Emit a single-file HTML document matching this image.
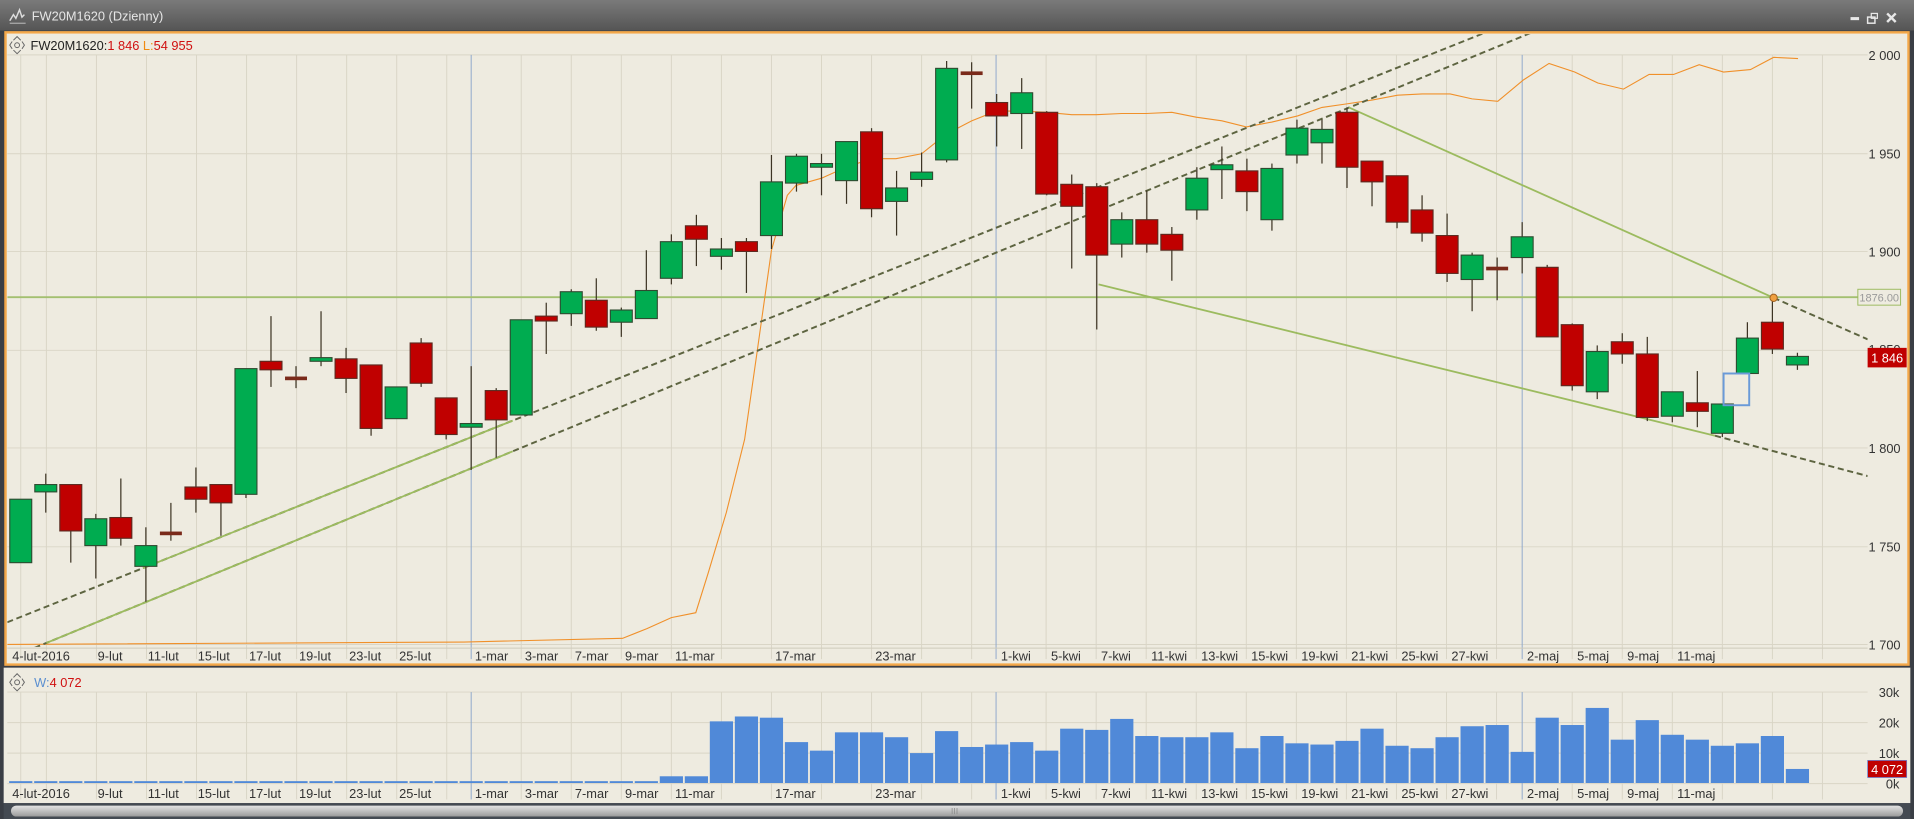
<!DOCTYPE html>
<html><head><meta charset="utf-8"><style>
html,body{margin:0;padding:0;background:#3b3f46;overflow:hidden}
svg{display:block}
text{font-family:"Liberation Sans",sans-serif}
</style></head><body>
<svg id="s" width="1914" height="819" viewBox="0 0 1568 671" preserveAspectRatio="none" xmlns="http://www.w3.org/2000/svg">
<defs>
<linearGradient id="tb" x1="0" y1="0" x2="0" y2="1"><stop offset="0" stop-color="#7a7a7a"/><stop offset="1" stop-color="#555"/></linearGradient>
<linearGradient id="sb" x1="0" y1="0" x2="0" y2="1"><stop offset="0" stop-color="#e4e4e4"/><stop offset="1" stop-color="#9a9a9a"/></linearGradient>
<clipPath id="pc"><rect x="6" y="28" width="1524" height="502"/></clipPath>
</defs>
<rect x="0" y="0" width="1568" height="671" fill="#3a3e45"/>
<rect x="0" y="0" width="1568" height="25" fill="url(#tb)"/>
<polyline points="8,17 11,12 13,15 16,8 18,14 20,12" fill="none" stroke="#ddd" stroke-width="1.2"/>
<line x1="8" y1="19" x2="21" y2="19" stroke="#ccc" stroke-width="0.8"/>
<text x="26" y="17" font-size="10.5" fill="#e6e6e6">FW20M1620 (Dzienny)</text>
<rect x="1516" y="14" width="7" height="2.5" fill="#e8e8e8"/>
<rect x="1530" y="14" width="6" height="5" fill="none" stroke="#e8e8e8" stroke-width="1.2"/><rect x="1533" y="11" width="5" height="4" fill="none" stroke="#e8e8e8" stroke-width="1"/>
<path d="M1546,11 L1553,18 M1553,11 L1546,18" stroke="#e8e8e8" stroke-width="2"/>
<rect x="4.5" y="26.5" width="1559" height="518" fill="#eeebe0" stroke="#f4a84a" stroke-width="2"/>
<g id="maingrid" stroke="#d9d5c6" stroke-width="0.8"></g>
<g id="main"></g>
<g fill="none" stroke="#666" stroke-width="0.8"><circle cx="14" cy="37" r="2"/><path d="M11,33 L14,30 L17,33 M11,41 L14,44 L17,41 M10,34 L8,37 L10,40 M18,34 L20,37 L18,40"/></g>
<text x="25" y="41" font-size="10.5" fill="#222">FW20M1620:<tspan fill="#d01010">1 846</tspan> <tspan fill="#f08a10">L:</tspan><tspan fill="#d01010">54 955</tspan></text>
<g font-size="10.5" fill="#333" text-anchor="end">
<text x="1557" y="49">2 000</text><text x="1557" y="130">1 950</text><text x="1557" y="210">1 900</text><text x="1557" y="290">1 850</text><text x="1557" y="371">1 800</text><text x="1557" y="452">1 750</text><text x="1557" y="532">1 700</text>
</g>
<rect x="1522" y="237" width="35" height="13" fill="#eeebe0" stroke="#9cbb5f" stroke-width="0.8"/>
<text x="1539.5" y="247" font-size="9" fill="#999" text-anchor="middle">1876.00</text>
<rect x="1530" y="285" width="32" height="16" fill="#c00000"/>
<text x="1546" y="297" font-size="10.5" fill="#fff" text-anchor="middle">1 846</text>
<g id="xl1" font-size="10.5" fill="#333"></g>
<rect x="3" y="547" width="1562" height="111" fill="#eeebe0"/>
<g id="volgrid" stroke="#d9d5c6" stroke-width="0.8"></g>
<g id="vol"></g>
<g fill="none" stroke="#666" stroke-width="0.8"><circle cx="14" cy="559" r="2"/><path d="M11,555 L14,552 L17,555 M11,563 L14,566 L17,563 M10,556 L8,559 L10,562 M18,556 L20,559 L18,562"/></g>
<text x="28" y="563" font-size="10.5" fill="#5b8fd0">W:<tspan fill="#d01010">4 072</tspan></text>
<g font-size="10.5" fill="#333" text-anchor="end">
<text x="1556" y="571">30k</text><text x="1556" y="596">20k</text><text x="1556" y="621">10k</text><text x="1556" y="646">0k</text>
</g>
<rect x="1530" y="623" width="32" height="14" fill="#c00000" stroke="#6a7fd0" stroke-width="0.6"/>
<text x="1546" y="634" font-size="10.5" fill="#fff" text-anchor="middle">4 072</text>
<g id="xl2" font-size="10.5" fill="#333"></g>
<rect x="3" y="658" width="1562" height="13" fill="#444a52"/>
<rect x="9" y="660" width="1550" height="9" rx="4.5" fill="url(#sb)"/>
<path d="M780,662 v5 M782,662 v5 M784,662 v5" stroke="#888" stroke-width="0.6"/>
</svg>
<script>
var NS="http://www.w3.org/2000/svg";
function el(p,t,a){var e=document.createElementNS(NS,t);for(var k in a)e.setAttribute(k,a[k]);p.appendChild(e);return e;}
var labels=[["4-lut-2016",10],["9-lut",80],["11-lut",121],["15-lut",162],["17-lut",204],["19-lut",245],["23-lut",286],["25-lut",327],["1-mar",389],["3-mar",430],["7-mar",471],["9-mar",512],["11-mar",553],["17-mar",635],["23-mar",717],["1-kwi",820],["5-kwi",861],["7-kwi",902],["11-kwi",943],["13-kwi",984],["15-kwi",1025],["19-kwi",1066],["21-kwi",1107],["25-kwi",1148],["27-kwi",1189],["2-maj",1251],["5-maj",1292],["9-maj",1333],["11-maj",1374]];
var mg=document.getElementById("maingrid"),vg=document.getElementById("volgrid");
var gx=[17,38,79,120,161,202,243,284,325,366,427,468,509,550,591,632,673,714,755,796,857,898,939,980,1021,1062,1103,1144,1185,1226,1288,1329,1370,1411,1452,1493];
gx.forEach(function(x){el(mg,"line",{x1:x,y1:45,x2:x,y2:540});el(vg,"line",{x1:x,y1:567,x2:x,y2:655});});
[45,126,206,287,367,448,528].forEach(function(y){el(mg,"line",{x1:6,y1:y,x2:1530,y2:y});});
[567,592,617,642].forEach(function(y){el(vg,"line",{x1:6,y1:y,x2:1530,y2:y});});
[386,816,1247].forEach(function(x){el(mg,"line",{x1:x,y1:45,x2:x,y2:540,stroke:"#8fa8cc"});el(vg,"line",{x1:x,y1:567,x2:x,y2:655,stroke:"#8fa8cc"});});
el(mg,"line",{x1:6,y1:531,x2:1530,y2:531,stroke:"#cfcbbb"});
var xl1=document.getElementById("xl1"),xl2=document.getElementById("xl2");
labels.forEach(function(l){var t=el(xl1,"text",{x:l[1],y:541});t.textContent=l[0];var t2=el(xl2,"text",{x:l[1],y:654});t2.textContent=l[0];});
var m=document.getElementById("main");
var g=el(m,"g",{"clip-path":"url(#pc)"});
el(g,"line",{x1:6,y1:243.5,x2:1530,y2:243.5,stroke:"#a3c070","stroke-width":1.6});
el(g,"polyline",{points:"6,528 380,526 510,523 530,515 550,506 570,502 580,470 595,420 610,360 620,290 632,205 645,160 652,152 673,146 693,137 714,130 734,130 755,126 775,110 796,99 816,91 837,91 857,92 878,94 898,94 919,93 939,93 960,92 980,96 1001,99 1021,104 1042,100 1063,95 1083,88 1104,85 1124,82 1145,78 1165,77 1188,77 1206,81 1227,83 1248,65.5 1269,52 1290,59 1309,68 1330,73 1351,61 1371,61 1392,53 1412,59 1434,57 1453,47 1473,48",fill:"none",stroke:"#f0902a","stroke-width":0.9});
function ly1(x){return 509-0.399*(x-8);} function ly2(x){return 528-0.411*(x-35);}
el(g,"line",{x1:6,y1:ly1(6),x2:1300,y2:ly1(1300),stroke:"#5d6440","stroke-width":1.6,"stroke-dasharray":"5,3"});
el(g,"line",{x1:6,y1:ly2(6),x2:1300,y2:ly2(1300),stroke:"#5d6440","stroke-width":1.6,"stroke-dasharray":"5,3"});
el(g,"line",{x1:117,y1:ly1(117),x2:420,y2:ly1(420),stroke:"#9cbb5f","stroke-width":1.5});
el(g,"line",{x1:38,y1:ly2(38),x2:420,y2:ly2(420),stroke:"#9cbb5f","stroke-width":1.5});
el(g,"line",{x1:1105,y1:88,x2:1453,y2:244,stroke:"#9cbb5f","stroke-width":1.5});
el(g,"line",{x1:1453,y1:244,x2:1530,y2:278,stroke:"#5d6440","stroke-width":1.6,"stroke-dasharray":"5,3"});
el(g,"line",{x1:900,y1:233,x2:1405,y2:357,stroke:"#9cbb5f","stroke-width":1.5});
el(g,"line",{x1:1405,y1:357,x2:1530,y2:390,stroke:"#5d6440","stroke-width":1.6,"stroke-dasharray":"5,3"});
var d=[[409,461,409,461,"g"],[397,403,388,420,"g"],[397,435,397,461,"r"],[425,447,421,474,"g"],[424,441,392,447,"r"],[447,464,432,493,"g"],[437,437,412,443,"d"],[399,409,383,420,"r"],[397,412,397,439,"r"],[302,405,302,408,"g"],[296,303,259,317,"r"],[310,310,300,318,"d"],[293,296,255,300,"g"],[294,310,285,322,"r"],[299,351,299,357,"r"],[317,343,317,343,"g"],[281,314,277,317,"r"],[326,356,326,360,"r"],[347,350,300,385,"g"],[320,344,318,375,"r"],[262,340,262,340,"g"],[259,263,248,290,"r"],[239,257,237,267,"g"],[246,268,228,271,"r"],[254,264,252,276,"g"],[238,261,205,261,"g"],[198,228,192,233,"g"],[185,196,176,218,"r"],[204,210,195,221,"g"],[198,206,195,240,"r"],[149,193,127,204,"g"],[128,150,126,157,"g"],[134,137,126,160,"g"],[116,148,116,167,"g"],[108,171,105,178,"r"],[154,165,140,193,"g"],[141,147,125,153,"g"],[56,131,50,133,"g"],[60,60,51,89,"d"],[84,95,77,120,"r"],[76,93,64,122,"g"],[92,159,91,160,"r"],[151,169,143,220,"r"],[153,209,150,270,"r"],[180,200,174,211,"g"],[180,200,156,207,"r"],[192,205,186,230,"r"],[146,172,137,180,"g"],[135,139,120,163,"g"],[140,157,130,173,"r"],[138,180,134,189,"g"],[105,127,98,134,"g"],[106,117,98,134,"g"],[92,137,88,154,"r"],[132,149,132,169,"r"],[144,182,144,187,"r"],[172,191,160,198,"r"],[193,224,175,231,"r"],[209,229,207,255,"g"],[220,220,211,246,"d"],[194,211,182,224,"g"],[219,276,217,276,"r"],[266,316,265,320,"r"],[288,321,283,327,"g"],[280,290,273,298,"r"],[290,342,276,345,"r"],[321,341,321,346,"g"],[330,337,304,350,"r"],[331,355,331,358,"g"],[277,306,264,306,"g"],[264,286,244,290,"r"],[292,299,289,303,"g"]];
d.forEach(function(c,i){var x=17+20.5*i;
 el(g,"line",{x1:x,y1:c[2],x2:x,y2:c[3],stroke:"#3d3424","stroke-width":1});
 if(c[4]=="d"){el(g,"rect",{x:x-9,y:c[0]-1.5,width:18,height:3,fill:"#7a2a1a"});}
 else{var h=Math.max(c[1]-c[0],3);el(g,"rect",{x:x-9,y:c[0],width:18,height:h,fill:c[4]=="g"?"#00ac50":"#c00000",stroke:c[4]=="g"?"#2f4a30":"#5a2a20","stroke-width":0.9});}
});
el(g,"rect",{x:1412,y:306,width:21,height:26,fill:"none",stroke:"#6a9ad8","stroke-width":1.6});
el(g,"circle",{cx:1453,cy:244,r:3,fill:"#f0a040",stroke:"#a06020","stroke-width":0.8});
var v=document.getElementById("vol");
var vt={26:636,27:636,28:591,29:587,30:588,31:608,32:615,33:600,34:600,35:604,36:617,37:599,38:612,39:610,40:608,41:615,42:597,43:598,44:589,45:603,46:604,47:604,48:600,49:613,50:603,51:609,52:610,53:607,54:597,55:611,56:613,57:604,58:595,59:594,60:616,61:588,62:594,63:580,64:606,65:590,66:602,67:606,68:611,69:609,70:603,71:630};
for(var i=0;i<72;i++){var x=17+20.5*i;var t=vt[i]||640;el(v,"rect",{x:x-9.5,y:t,width:19,height:641.5-t,fill:"#5089d8"});}
</script>
</body></html>
